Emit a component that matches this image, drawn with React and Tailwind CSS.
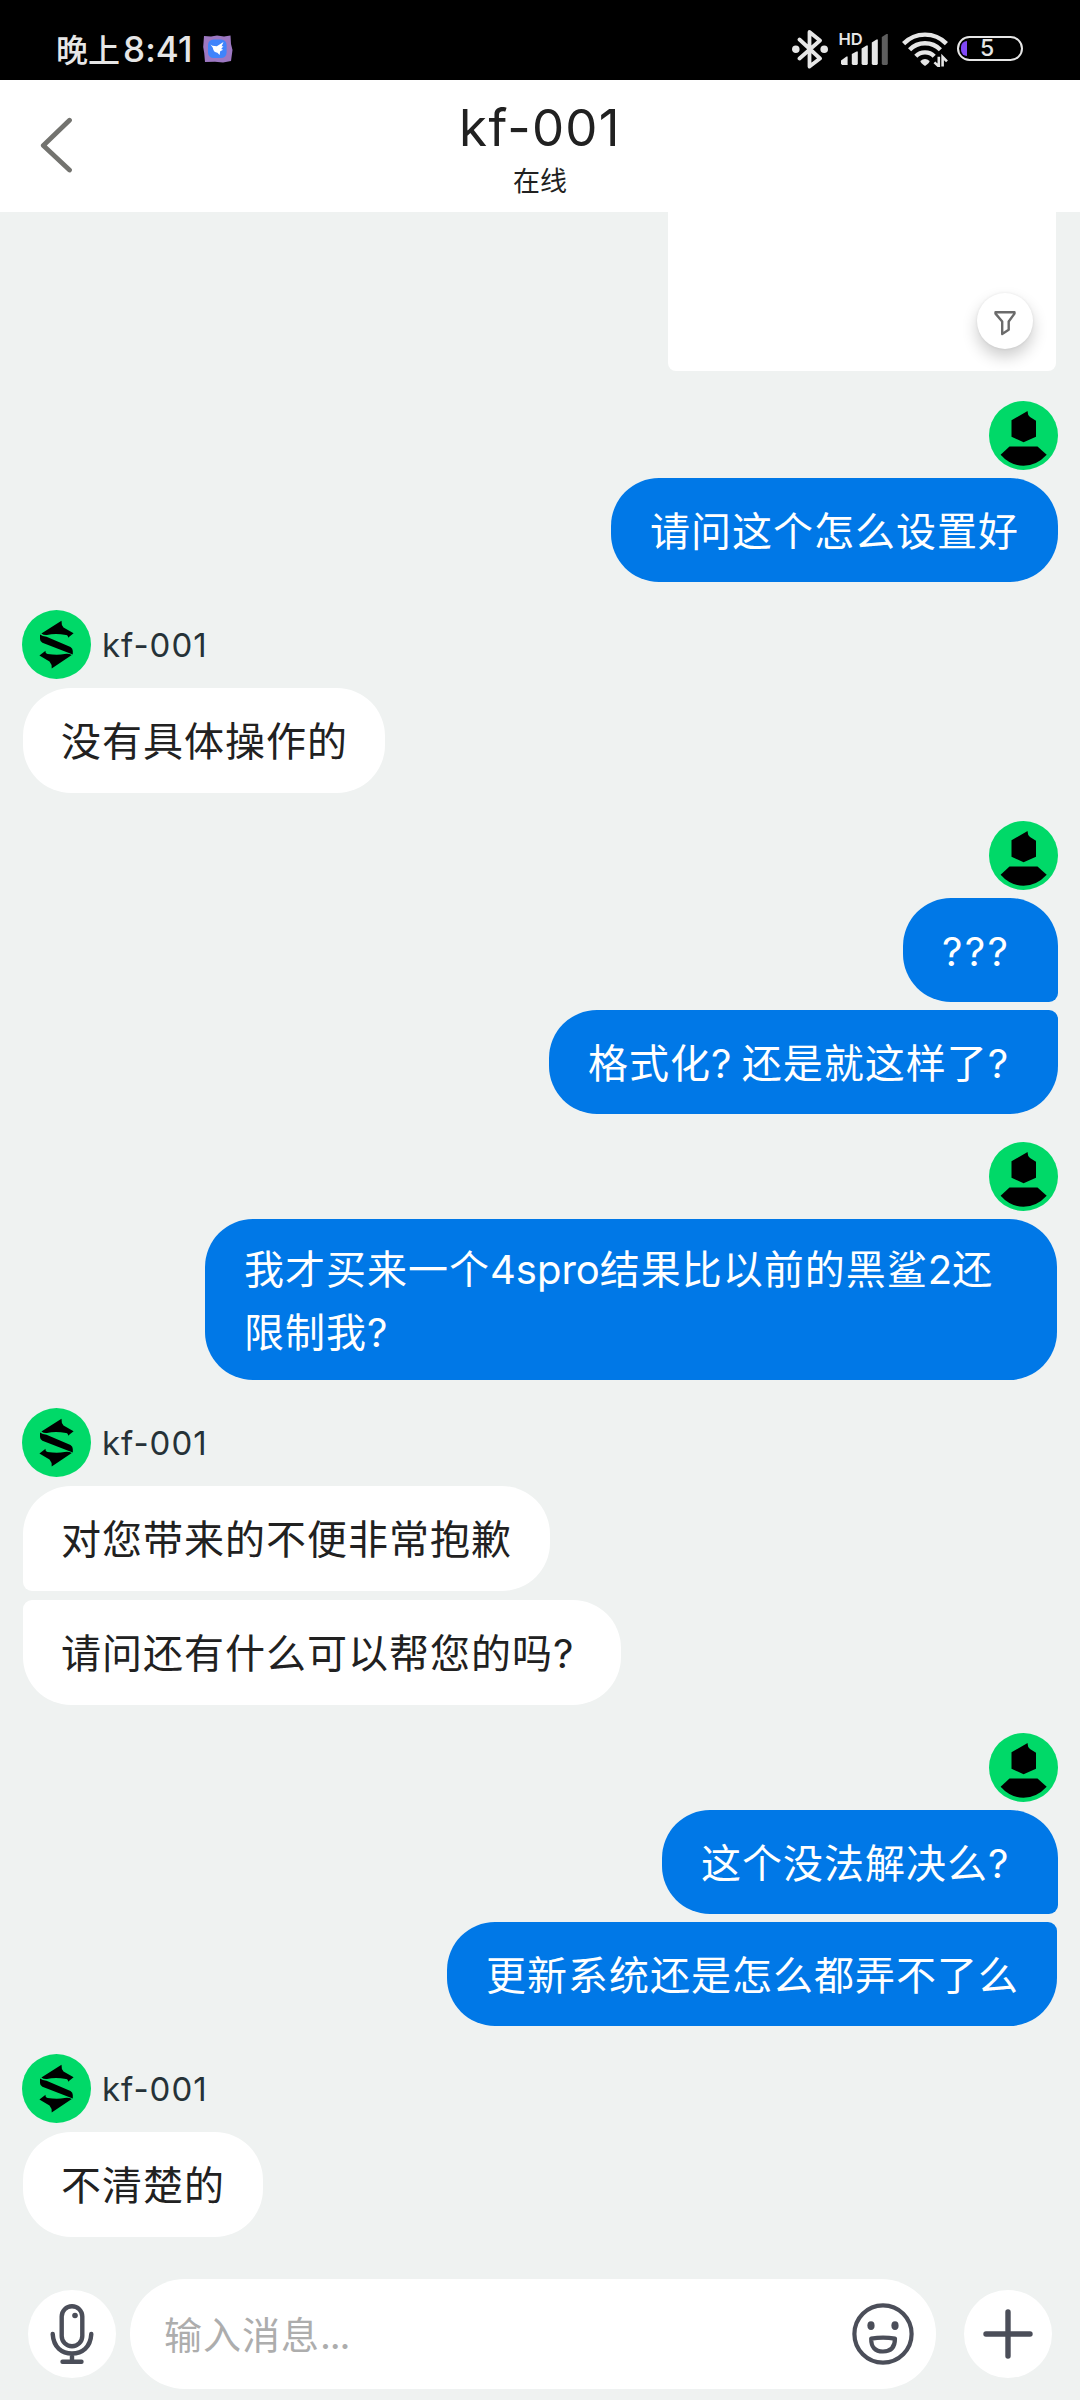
const groups = [
  {
    key: 'ask-settings',
    mine: true,
    spacing: 'mt-[30px]',
    messages: [{ key: 1, text: '请问这个怎么设置好', shape: 'w-[447px] h-[104px] rounded-[48px]' }],
  },
  {
    key: 'no-steps',
    spacing: 'mt-[28px]',
    messages: [{ key: 1, text: '没有具体操作的', shape: 'w-[362px] h-[105px] rounded-[48px]' }],
  },
  {
    key: 'format',
    mine: true,
    spacing: 'mt-[28px]',
    messages: [
      {
        key: 1,
        text: <span className="tracking-[2.3px]">???</span>,
        shape: 'w-[155px] h-[104px] rounded-[48px] rounded-br-[9px]',
      },
      {
        key: 2,
        text: <span className="[word-spacing:-3px]">格式化? 还是就这样了?</span>,
        shape: 'w-[509px] h-[104px] rounded-[48px] rounded-tr-[9px]',
      },
    ],
  },
  {
    key: 'limits',
    mine: true,
    spacing: 'mt-[28px]',
    messages: [
      {
        key: 1,
        text: (
          <>
            我才买来一个<span className="tracking-normal">4spro</span>结果比以前的黑鲨
            <span className="tracking-normal">2</span>还
            <br />
            限制我?
          </>
        ),
        shape: 'mr-[1px] w-[852px] h-[161px] rounded-[48px]',
      },
    ],
  },
  {
    key: 'sorry',
    spacing: 'mt-[28px]',
    messages: [
      { key: 1, text: '对您带来的不便非常抱歉', shape: 'w-[527px] h-[105px] rounded-[48px] rounded-bl-[9px]' },
      { key: 2, text: '请问还有什么可以帮您的吗?', shape: 'w-[598px] h-[105px] rounded-[48px] rounded-tl-[9px]' },
    ],
  },
  {
    key: 'unsolved',
    mine: true,
    spacing: 'mt-[28px]',
    messages: [
      { key: 1, text: '这个没法解决么?', shape: 'w-[396px] h-[104px] rounded-[48px] rounded-br-[9px]' },
      {
        key: 2,
        text: '更新系统还是怎么都弄不了么',
        shape: 'mr-[1px] w-[610px] h-[104px] rounded-[48px] rounded-tr-[9px]',
      },
    ],
  },
  {
    key: 'unclear',
    spacing: 'mt-[28px]',
    messages: [{ key: 1, text: '不清楚的', shape: 'w-[240px] h-[105px] rounded-[48px]' }],
  },
];

const UserAvatar = () => (
  <svg viewBox="0 0 69 69" className="block size-[69px]">
    <circle cx="34.5" cy="34.5" r="34.5" fill="#00d968" />
    <path d="M22.5 19.2 L38.6 10 Q38.4 14.2 41 16 L47 19.8 V35.8 L34.6 41.2 L22.5 35.8 Z" />
    <path d="M20.5 45.5 H48.5 L57.7 53.8 Q47.5 64.8 34.5 64.8 Q21.5 64.8 11.6 53.8 Z" />
  </svg>
);

const SupportAvatar = () => (
  <svg viewBox="0 0 69 69" className="block size-[69px]">
    <circle cx="34.5" cy="34.5" r="34.5" fill="#00d968" />
    <path d="M19.4 23.4 L39.5 10.8 Q39.2 15 41.5 17.4 L51.6 23.2 L46 27.8 Q46.4 25.4 44 24.9 Q33 23 25 25 Q21.6 25.3 19.4 23.4 Z" />
    <path d="M18 24.6 Q20.5 26.6 24.5 26.8 L48.5 37 Q50.8 38.4 50.8 41 V44.6 L20.4 32.8 Q18 31.6 18 29 Z" />
    <path d="M49.8 45 L29.7 58.5 Q30 54.2 27.5 51.6 L17.4 45.4 L23.6 40.8 Q23 43.4 25.6 44 Q36 45.4 42.6 43.9 Q46.8 43.3 49.8 45 Z" />
  </svg>
);

const BluetoothIcon = () => (
  <svg viewBox="0 0 36 40" className="h-10 w-9" fill="none" stroke="#e6e6e6" strokeWidth="3.8" strokeLinejoin="round" strokeLinecap="round">
    <path d="M7.5 10.5 L28 29.5 L17.5 37.5 V3 L28 11.5 L7.5 29.5" />
    <circle cx="3.8" cy="20.3" r="1.9" />
    <circle cx="32.2" cy="20.3" r="1.9" />
  </svg>
);

const SignalIcon = () => (
  <svg viewBox="0 0 52 36" className="h-9 w-[52px]" fill="#e6e6e6">
    <text x="-0.5" y="15" fontSize="16.5" fontWeight="600" fontFamily="Inter, sans-serif">
      HD
    </text>
    <path d="M2 33.5 V30.5 L7.5 26.5 H8.6 V35 H3 Z" />
    <path d="M12.8 24 L17.5 21.5 H18.8 V34 L17.8 35 H13.8 L12.8 34 Z" />
    <path d="M22.6 18.5 L27.5 15.5 H28.8 V34 L27.8 35 H23.6 L22.6 34 Z" />
    <path d="M32.8 12.5 L37.5 9.5 H38.8 V34 L37.8 35 H33.8 L32.8 34 Z" />
    <path d="M42.8 7 L47.5 4 H48.8 V34 L47.8 35 H43.8 L42.8 34 Z" fill="#5e5e5e" />
  </svg>
);

// three arcs around the dot at (23, 32), with the traffic arrows at the right
const WifiIcon = () => (
  <svg viewBox="0 0 46 36" className="h-9 w-[46px]" fill="none" stroke="#e6e6e6" strokeWidth="4.4">
    <path d="M1.6 12.6 A30 30 0 0 1 44.4 12.6" />
    <path d="M7.6 18.8 A21.5 21.5 0 0 1 38.4 18.8" />
    <path d="M13.8 25.2 A13 13 0 0 1 32.2 25.2" />
    <path d="M18.4 30 Q23 26.2 27.6 30 Q27.6 32 23 35 Q18.4 32 18.4 30 Z" fill="#e6e6e6" stroke="none" />
    <path d="M36.8 25.8 V35.4 L32.4 31.4 M40.6 35.6 V26 L45 30.4" strokeWidth="2.6" />
  </svg>
);

const StatusBar = () => (
  <div className="flex h-20 shrink-0 bg-black text-[#e6e6e6]">
    <div className="flex flex-1 pt-[27px] pl-[56px]">
      <span className="text-[32px] leading-[44px] font-medium whitespace-nowrap">
        晚上<span className="ml-[3px] text-[35px] tracking-[0.1px]">8:41</span>
      </span>
      <svg viewBox="0 0 30 28" className="mt-[8px] ml-[10px] h-7 w-[30px]">
        <path d="M1 1 L8 1.5 L14 0.6 L21 1.6 L27.5 0.4 L28 9 L29.5 15 L28 26 L20 27.4 L12 26.8 L2 27 L1.2 18 L0.2 12 Z" fill="#9d78c2" />
        <rect x="5" y="4.5" width="18.6" height="18.6" rx="5.5" fill="#3f84fb" />
        <path d="M7.5 9.5 L9.5 10.8 L13.8 11.2 L20.5 7 L18.6 11.2 H20.4 L18.2 14 L20.2 14.8 L17.2 16.2 L16.6 20 L14.4 17.8 Q10.6 17.6 9.8 12.8 Z" fill="#fff" />
      </svg>
    </div>
    <div className="flex pt-[29px] pr-[57px]">
      <BluetoothIcon />
      <div className="mt-[1px] ml-[11px]">
        <SignalIcon />
      </div>
      <div className="mt-[2px] ml-[11px]">
        <WifiIcon />
      </div>
      <div className="mt-[7px] ml-[9px] flex h-[25px] w-[66px] items-center rounded-full border-2 border-[#e6e6e6] p-[2px]">
        <div className="h-[15px] w-[6px] rounded-l-full bg-[#8048f5]" />
        <span className="ml-[13px] text-[23px] leading-none font-medium">5</span>
      </div>
    </div>
  </div>
);

const Header = () => (
  <header className="grid h-[132px] shrink-0 grid-cols-[200px_1fr_200px] bg-white">
    <svg viewBox="0 0 32 56" className="mt-[37px] ml-10 h-14 w-8" fill="none" stroke="#73736f" strokeWidth="4.8" strokeLinecap="round" strokeLinejoin="round">
      <path d="M29.5 3.2 L3.3 28.5 L29.5 53" />
    </svg>
    <div className="flex flex-col items-center text-[#212121]">
      <h1 className="mt-[16px] text-[51px] leading-[64px] tracking-[1.3px]">kf-001</h1>
      <p className="mt-[3px] text-[27px] leading-[38px]">在线</p>
    </div>
  </header>
);

const SharedImage = () => (
  <div className="mr-[24px] flex h-[159px] w-[388px] items-end justify-end self-end rounded-b-lg bg-white pr-[23px] pb-[22px]">
    <div className="flex size-14 items-center justify-center rounded-full bg-white shadow-[0_8px_16px_rgba(0,0,0,0.2),0_0_3px_rgba(0,0,0,0.08)]">
      <svg viewBox="0 0 24 26" className="mt-[3px] h-[26px] w-6" fill="none" stroke="#6b6b6b" strokeWidth="2.4" strokeLinejoin="round">
        <path d="M2.5 2.2 H21.5 V3.6 L15.7 11.5 V19.8 L9.2 24 V11.5 L2.5 3.6 Z" />
      </svg>
    </div>
  </div>
);

const Bubble = ({ message, mine }) => (
  <div
    className={`flex items-center pt-[4px] ${mine ? 'bg-[#0078e7] pl-[39px] text-white' : 'bg-white pl-[38px] text-[#212121]'} ${message.shape}`}
  >
    <p className="text-[40px] leading-[62.6px] tracking-[1px] whitespace-nowrap">{message.text}</p>
  </div>
);

const MessageGroup = ({ group }) => {
  if (group.mine) {
    return (
      <section className={`flex flex-col items-end pr-[22px] ${group.spacing}`}>
        <UserAvatar />
        <div className="mt-2 flex flex-col items-end gap-2">
          {group.messages.map((message) => (
            <Bubble key={message.key} message={message} mine />
          ))}
        </div>
      </section>
    );
  }

  return (
    <section className={`flex flex-col items-start pl-[22px] ${group.spacing}`}>
      <div className="flex items-center gap-[11px]">
        <SupportAvatar />
        <span className="text-[33px] leading-[44px] tracking-[1px] text-[#263238]">kf-001</span>
      </div>
      <div className="mt-[9px] ml-[1px] flex flex-col items-start gap-[9px]">
        {group.messages.map((message) => (
          <Bubble key={message.key} message={message} />
        ))}
      </div>
    </section>
  );
};

const Composer = () => (
  <footer className="flex h-[121px] shrink-0 items-start pr-7 pl-7">
    <button className="mt-[11px] flex size-[88px] items-center justify-center rounded-full bg-white">
      <svg viewBox="0 0 44 60" className="h-[60px] w-11" fill="none" stroke="#4b4e59" strokeWidth="4.4" strokeLinecap="round">
        <rect x="11.7" y="2.2" width="20.6" height="40" rx="10.3" />
        <path d="M2.7 30 C3.5 43.5 12 49.5 22 49.5 S40.5 43.5 41.3 30 M22 49.5 V58 M12.5 57.8 H31.5" />
        <circle cx="25" cy="11.5" r="2.8" fill="#4b4e59" stroke="none" />
      </svg>
    </button>
    <div className="ml-[14px] flex h-[110px] w-[806px] items-center justify-between rounded-full bg-white pr-[22px] pl-[34px]">
      <span className="pt-[2px] text-[38px] leading-[60px] tracking-[1px] text-[#adadad]">
        输入消息<span className="tracking-[-1.2px]">...</span>
      </span>
      <svg viewBox="0 0 62 62" className="size-[62px]" fill="none" stroke="#4b4e59" strokeWidth="4.2">
        <circle cx="31" cy="31" r="28.6" />
        <ellipse cx="19" cy="22.6" rx="3.6" ry="4.4" fill="#4b4e59" stroke="none" />
        <ellipse cx="43" cy="22.6" rx="3.6" ry="4.4" fill="#4b4e59" stroke="none" />
        <path d="M19.2 35.6 Q31 33.6 43 35.6 Q43 48.5 31 48.5 T19.2 35.6 Z" strokeLinejoin="round" />
      </svg>
    </div>
    <button className="mt-[11px] ml-7 flex size-[88px] items-center justify-center rounded-full bg-white">
      <svg viewBox="0 0 50 50" className="size-[50px]" stroke="#4b4e59" strokeWidth="5.4" strokeLinecap="round">
        <path d="M25 3 V47 M3 25 H47" />
      </svg>
    </button>
  </footer>
);

const App = () => (
  <main className="flex h-[2400px] w-[1080px] flex-col overflow-hidden bg-[#eff2f1] font-[Inter,'Noto_Sans_CJK_SC',sans-serif]">
    <StatusBar />
    <Header />
    <div className="flex flex-1 flex-col">
      <SharedImage />
      {groups.map((group) => (
        <MessageGroup key={group.key} group={group} />
      ))}
    </div>
    <Composer />
  </main>
);

export default App;
